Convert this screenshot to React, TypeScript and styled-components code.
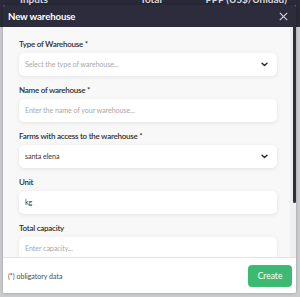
import React from "react";
import styled, { createGlobalStyle } from "styled-components";

const Global = createGlobalStyle`
  html, body { margin: 0; padding: 0; }
  body { font-family: "Lato", "Noto Sans", sans-serif; }
  * { box-sizing: border-box; }
`;

const Page = styled.div`
  position: relative;
  width: 300px;
  height: 297px;
  overflow: hidden;
  background: #c9cbce;
`;

const TableHead = styled.div`
  height: 27px;
  background: #2a2938;
  display: flex;
  align-items: flex-start;
  padding: 0 8px 0 20px;
  overflow: hidden;
`;

const HeadCell = styled.div<{ $w: number }>`
  width: ${(p) => p.$w}px;
  margin-top: -7px;
  font-size: 10px;
  font-weight: 700;
  color: #d8d8de;
  line-height: 12px;
  white-space: nowrap;
`;

const Modal = styled.div`
  position: absolute;
  left: 3px;
  top: 5px;
  width: 293px;
  height: 288px;
  display: flex;
  flex-direction: column;
  background: #ffffff;
  border-radius: 2px;
  overflow: hidden;
  box-shadow: 0 0 3px rgba(0, 0, 0, 0.25);
`;

const Header = styled.div`
  height: 22px;
  flex: none;
  background: #2d2c3d;
  display: flex;
  align-items: center;
  justify-content: space-between;
  padding: 0 8px 0 5px;
`;

const Title = styled.div`
  color: #ffffff;
  font-size: 9.6px;
  font-weight: 700;
  letter-spacing: -0.1px;
`;

const Close = styled.button`
  border: 0;
  background: none;
  padding: 0;
  width: 10px;
  height: 10px;
  display: flex;
  align-items: center;
  justify-content: center;
`;

const BodyWrap = styled.div`
  position: relative;
  flex: 1;
  min-height: 0;
`;

const Body = styled.div`
  height: 100%;
  overflow: hidden;
  background: #f8f8f8;
  padding: 11px 19px 0 16px;
  display: flex;
  flex-direction: column;
  gap: 8px;
`;

const Track = styled.div`
  position: absolute;
  top: 0;
  right: 0;
  bottom: 0;
  width: 6px;
  background: #efefef;
`;

const Thumb = styled.div`
  position: absolute;
  top: 0;
  right: 0;
  width: 3px;
  height: 176px;
  background: #2f2e3c;
  border-radius: 0 0 2px 2px;
`;

const Field = styled.div`
  display: flex;
  flex-direction: column;
  gap: 3px;
  flex: none;
`;

const Label = styled.div`
  font-size: 8px;
  line-height: 12px;
  color: #2e2e2e;
  font-weight: 600;
  letter-spacing: -0.25px;
`;

const Box = styled.div`
  height: 23px;
  background: #ffffff;
  border-radius: 5px;
  box-shadow: 0 1px 4px rgba(0, 0, 0, 0.09);
  display: flex;
  align-items: center;
  justify-content: space-between;
  padding: 0 9px 0 6px;
`;

const Value = styled.span<{ $placeholder?: boolean }>`
  font-size: 7.2px;
  color: ${(p) => (p.$placeholder ? "#a9a9a9" : "#3a3a3a")};
  letter-spacing: -0.1px;
`;

const Footer = styled.div`
  height: 36px;
  flex: none;
  border-top: 1px solid #e3e3e3;
  background: #ffffff;
  display: flex;
  align-items: center;
  justify-content: space-between;
  padding: 0 4px 0 5px;
`;

const Note = styled.span`
  font-size: 7px;
  color: #4a4a4a;
`;

const CreateButton = styled.button`
  width: 44px;
  height: 22px;
  border: 0;
  border-radius: 4px;
  background: #3dba72;
  color: #ffffff;
  font-family: "Lato", "Noto Sans", sans-serif;
  font-size: 8.5px;
  padding: 0;
`;

const Chevron = () => (
  <svg width="7" height="5" viewBox="0 0 7 5">
    <path d="M1 1.2 L3.5 3.6 L6 1.2" fill="none" stroke="#2a2a2a" strokeWidth="1.4" strokeLinecap="round" strokeLinejoin="round" />
  </svg>
);

const fields: { label: string; value: string; placeholder: boolean; select: boolean }[] = [
  { label: "Type of Warehouse *", value: "Select the type of warehouse...", placeholder: true, select: true },
  { label: "Name of warehouse *", value: "Enter the name of your warehouse...", placeholder: true, select: false },
  { label: "Farms with access to the warehouse *", value: "santa elena", placeholder: false, select: true },
  { label: "Unit", value: "kg", placeholder: false, select: false },
  { label: "Total capacity", value: "Enter capacity...", placeholder: true, select: false },
];

export default function App() {
  return (
    <Page>
      <Global />
      <TableHead>
        <HeadCell $w={125}>Inputs</HeadCell>
        <HeadCell $w={68}>Total</HeadCell>
        <HeadCell $w={90}>PPP (US$/Unidad)</HeadCell>
      </TableHead>
      <Modal>
        <Header>
          <Title>New warehouse</Title>
          <Close aria-label="close">
            <svg width="9" height="9" viewBox="0 0 9 9">
              <path d="M0.8 0.8 L8.2 8.2 M8.2 0.8 L0.8 8.2" stroke="#d0d0d6" strokeWidth="1.2" />
            </svg>
          </Close>
        </Header>
        <BodyWrap>
          <Body>
            {fields.map((f) => (
              <Field key={f.label}>
                <Label>{f.label}</Label>
                <Box>
                  <Value $placeholder={f.placeholder}>{f.value}</Value>
                  {f.select && <Chevron />}
                </Box>
              </Field>
            ))}
          </Body>
          <Track>
            <Thumb />
          </Track>
        </BodyWrap>
        <Footer>
          <Note>(*) obligatory data</Note>
          <CreateButton>Create</CreateButton>
        </Footer>
      </Modal>
    </Page>
  );
}
